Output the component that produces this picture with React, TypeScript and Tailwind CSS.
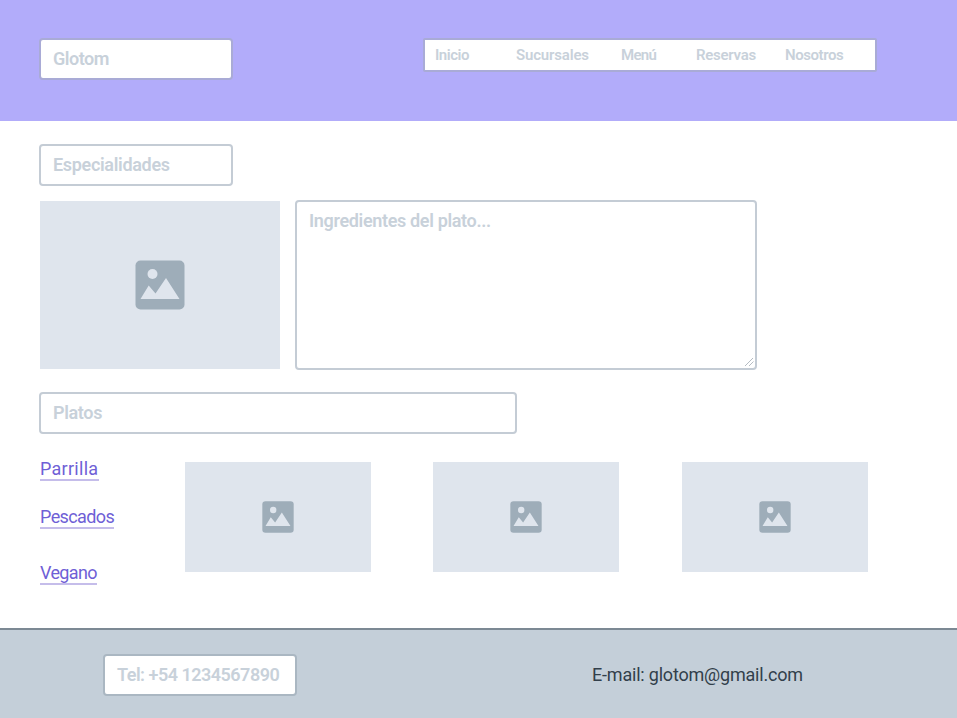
import type { ReactNode } from 'react';

function Picture({ size, className }: { size: number; className: string }) {
  return (
    <div className={`flex items-center justify-center bg-[#dfe5ed] ${className}`}>
      <svg width={size} height={size} viewBox="0 0 50 50" aria-hidden="true">
        <rect x="0.5" y="0.5" width="49" height="49" rx="5" fill="#9eadb9" />
        <circle cx="17.5" cy="14" r="5" fill="#dfe5ed" />
        <path d="M5.5 39 L13.7 25.5 L20.5 33.5 L31 18 L44.5 39 Z" fill="#dfe5ed" />
      </svg>
    </div>
  );
}

function Field({ className, children }: { className: string; children: ReactNode }) {
  return (
    <div
      className={`rounded-[4px] border-2 bg-white px-3 pt-[7px] text-[18px] leading-6 font-semibold whitespace-nowrap text-[#c8d1da] ${className}`}
    >
      {children}
    </div>
  );
}

const navItems = [
  { label: 'Inicio', style: 'w-[81px] tracking-[-0.45px]' },
  { label: 'Sucursales', style: 'w-[105px] tracking-[-0.17px]' },
  { label: 'Menú', style: 'w-[75px] tracking-[-0.7px]' },
  { label: 'Reservas', style: 'w-[89px] tracking-[-0.28px]' },
  { label: 'Nosotros', style: 'w-[70px] tracking-[-0.43px]' },
];

const links = [
  { label: 'Parrilla', style: 'w-[59px] tracking-[0.28px]' },
  { label: 'Pescados', style: 'mt-[22px] w-[74px] tracking-[-0.6px]' },
  { label: 'Vegano', style: 'mt-[30px] w-[57px] tracking-[-0.65px]' },
];

export default function App() {
  return (
    <div className="flex h-[718px] w-[957px] flex-col overflow-hidden bg-white font-['Roboto',sans-serif]">
      <header className="flex h-[121px] shrink-0 items-start bg-[#b2acfa] pt-[38px] pl-[39px]">
        <Field className="h-[42px] w-[194px] border-[#a9abd6] tracking-[-0.5px]">Glotom</Field>
        <nav className="ml-[190px] flex h-[34px] w-[454px] rounded-[2px] border-2 border-[#a9abd6] bg-white pt-1 pl-[10px] text-[15px] leading-[22px] font-semibold text-[#c8d1da]">
          {navItems.map((item) => (
            <span key={item.label} className={`shrink-0 whitespace-nowrap ${item.style}`}>
              {item.label}
            </span>
          ))}
        </nav>
      </header>

      <main className="h-[507px] shrink-0 pt-[23px] pl-[39px]">
        <Field className="h-[42px] w-[194px] border-[#c4ccd5] tracking-[-0.32px]">Especialidades</Field>
        <section className="mt-[14px] flex items-center pl-px">
          <Picture size={50} className="h-[168px] w-[240px]" />
          <div className="ml-[15px] flex h-[170px] w-[462px] flex-col justify-between rounded-[4px] border-2 border-[#c4ccd5] bg-white pt-[7px] pl-3 text-[18px] leading-6 font-semibold tracking-[-0.34px] text-[#c8d1da]">
            <span>Ingredientes del plato...</span>
            <svg className="mb-px self-end" width="11" height="11" viewBox="0 0 11 11" fill="none" stroke="#b5bcc3" aria-hidden="true">
              <path d="M1 10 L9 2 M5 10 L9.5 5.5" />
            </svg>
          </div>
        </section>
        <Field className="mt-[22px] h-[42px] w-[478px] border-[#c4ccd5] tracking-[-0.35px]">Platos</Field>
        <section className="mt-[21px] flex pl-px">
          <div className="flex w-[145px] flex-col text-[18px] leading-[28px] text-[#6f5fd6]">
            {links.map((link) => (
              <a key={link.label} className={`h-[26px] border-b-2 border-[#c5bdea] whitespace-nowrap ${link.style}`}>
                {link.label}
              </a>
            ))}
          </div>
          <div className="mt-[7px] flex">
            <Picture size={32} className="h-[110px] w-[186px]" />
            <Picture size={32} className="ml-[62px] h-[110px] w-[186px]" />
            <Picture size={32} className="ml-[63px] h-[110px] w-[186px]" />
          </div>
        </section>
      </main>

      <footer className="flex h-[90px] shrink-0 items-start border-t-2 border-[#7c8994] bg-[#c4cfd9] pt-6 pl-[103px]">
        <Field className="h-[42px] w-[194px] border-[#aab7c2] tracking-[-0.5px]">Tel: +54 1234567890</Field>
        <span className="mt-[9px] ml-[295px] text-[18px] leading-6 tracking-[-0.2px] whitespace-nowrap text-[#323f4b]">
          E-mail: glotom@gmail.com
        </span>
      </footer>
    </div>
  );
}
